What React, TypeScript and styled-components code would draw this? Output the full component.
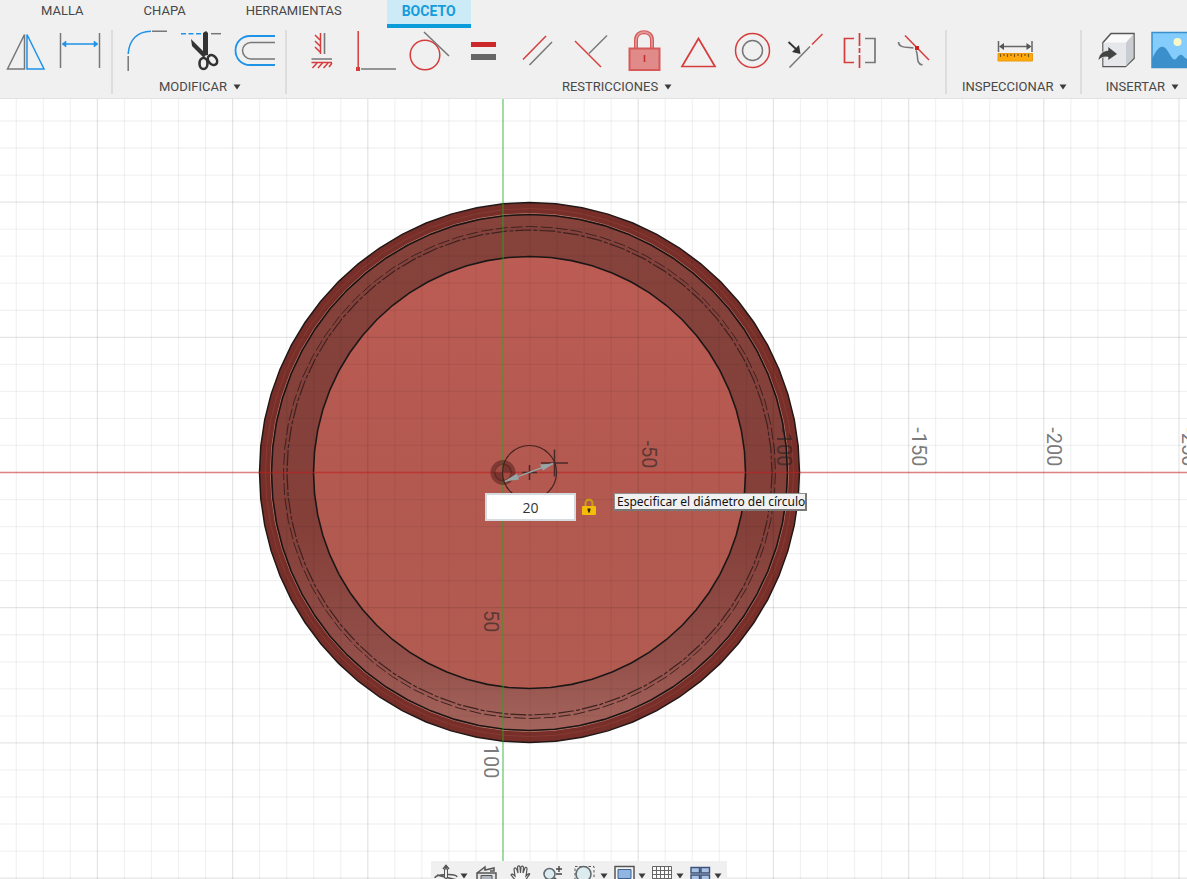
import React from "react";
import styled, { createGlobalStyle } from "styled-components";

const BLUE = "#1e93e8";
const GREY = "#777777";
const RED = "#d63c3c";

const GlobalStyle = createGlobalStyle`
  * { box-sizing: border-box; }
  body { margin: 0; background: #ffffff; }
`;

const Shell = styled.div`
  display: flex;
  flex-direction: column;
  height: 100vh;
  overflow: hidden;
  font-family: Roboto, "Liberation Sans", sans-serif;
  font-size: 13px;
  color: #484848;
`;

const Header = styled.header`
  flex: none;
  background: #f0f0f0;
  border-bottom: 1px solid #e2e2e2;
  overflow: hidden;
`;

const Tabs = styled.nav`
  display: flex;
  padding-left: 26px;
  height: 28px;
`;

const Tab = styled.button<{ $active?: boolean }>`
  font: inherit;
  font-size: ${(p) => (p.$active ? 14 : 13)}px;
  font-weight: ${(p) => (p.$active ? 700 : 400)};
  color: ${(p) => (p.$active ? "#169bdc" : "inherit")};
  background: ${(p) => (p.$active ? "#cdebf7" : "transparent")};
  border: 0;
  border-bottom: 4px solid ${(p) => (p.$active ? "#0b9cdc" : "transparent")};
  padding: 0 15px 2px;
  margin-right: ${(p) => (p.$active ? 0 : 30)}px;
  line-height: 20px;
`;

const Ribbon = styled.div`
  display: flex;
  height: 70px;
`;

const Section = styled.section<{ $pad: string; $grow?: boolean }>`
  flex: ${(p) => (p.$grow ? "1 0 auto" : "none")};
  display: flex;
  flex-direction: column;
  align-items: ${(p) => (p.$grow ? "flex-start" : "center")};
  padding: ${(p) => p.$pad};
  position: relative;
  &:not(:last-child)::after {
    content: "";
    position: absolute;
    right: 0;
    top: 2px;
    bottom: 4px;
    width: 2px;
    background: #dddddd;
  }
`;

const Tools = styled.div`
  display: flex;
  height: 48px;
`;

const ToolButton = styled.button`
  flex: none;
  width: 54px;
  height: 48px;
  padding: 0;
  border: 0;
  background: transparent;
  svg { display: block; }
`;

const SectionLabel = styled.button<{ $width?: number }>`
  display: flex;
  align-items: center;
  justify-content: center;
  gap: 6px;
  width: ${(p) => (p.$width ? p.$width + "px" : "auto")};
  padding: 0;
  border: 0;
  background: transparent;
  font: inherit;
  color: inherit;
  line-height: 22px;
  white-space: nowrap;
`;

const Canvas = styled.main`
  flex: 1;
  min-height: 0;
  position: relative;
  overflow: hidden;
  background: #ffffff;
`;

const Scene = styled.svg`
  display: block;
  width: 100%;
  height: 100%;
`;

const AxisText = styled.text`
  font-family: "Liberation Sans Narrow", Roboto, sans-serif;
  font-size: 20px;
  fill: #222222;
  fill-opacity: 0.62;
`;

const DimensionEntry = styled.form`
  position: absolute;
  left: 485px;
  top: 394px;
  display: flex;
  align-items: flex-start;
`;

const DimensionInput = styled.input`
  width: 91px;
  height: 28px;
  padding: 0;
  border: 2px solid #d5dade;
  background: #ffffff;
  color: #333333;
  font: 14px "Open Sans", sans-serif;
  text-align: center;
  outline: 0;
`;

const LockButton = styled.button`
  margin: 5px 17px 0 5px;
  padding: 0;
  border: 0;
  background: transparent;
  svg { display: block; }
`;

const Hint = styled.label`
  padding: 0 0 0 2px;
  border: 1px solid #909090;
  border-right: 2px solid #777777;
  border-bottom: 2px solid #777777;
  background: #f1f1f1;
  color: #111111;
  font: 12px/15px "Noto Sans", sans-serif;
  white-space: nowrap;
`;

const ViewBar = styled.div`
  position: absolute;
  left: 431px;
  bottom: -10px;
  display: flex;
  gap: 4px;
  height: 28px;
  padding: 0 5px 0 3px;
  background: #f0f0f0;
`;

const ViewButton = styled.button<{ $menu?: boolean }>`
  display: flex;
  align-items: flex-start;
  justify-content: center;
  gap: 2px;
  width: ${(p) => (p.$menu ? 34 : 30)}px;
  padding: 0;
  border: 0;
  background: transparent;
`;

const CaretBox = styled.span`
  padding-top: 12px;
  svg { display: block; }
`;

const Caret = () => (
  <svg width="8" height="6" aria-hidden="true">
    <path d="M0.5 0.5h7l-3.5 5z" fill="#3c3c3c" />
  </svg>
);

type Tool = { name: string; art: React.ReactNode };

const createTools: Tool[] = [
  {
    name: "Simetría",
    art: (
      <>
        <path d="M24.5 6.5V41H7.5z" stroke={GREY} />
        <path d="M27 6.5V41H44z" stroke={BLUE} />
      </>
    ),
  },
  {
    name: "Cota de boceto",
    art: (
      <>
        <path d="M6.5 5v35M45.5 5v35" stroke={GREY} />
        <path d="M9 16h34" stroke={BLUE} />
        <path d="M8 16l4-3v6zM44 16l-4-3v6z" fill={BLUE} stroke={BLUE} strokeWidth="0.6" />
      </>
    ),
  },
];

const modifyTools: Tool[] = [
  {
    name: "Empalme",
    art: (
      <>
        <path d="M9.200 26C10 12 18 3.500 32 3.300" stroke={BLUE} />
        <path d="M9.200 28v15M33 3.300h15" stroke={GREY} />
      </>
    ),
  },
  {
    name: "Recortar",
    art: (
      <>
        <path d="M8 5.700h22" stroke={BLUE} strokeDasharray="5 2.500" />
        <path d="M38 5.700h10" stroke={GREY} />
        <path d="M18 11l15 15-2 4L19 18zM30 5l3-2 2 2v22l-5 1z" fill="#333" />
        <ellipse cx="30.500" cy="35.500" rx="4" ry="5.500" stroke="#333" strokeWidth="2.600" />
        <ellipse cx="39.500" cy="32" rx="4" ry="5.500" transform="rotate(-38 39.5 32)" stroke="#333" strokeWidth="2.600" />
      </>
    ),
  },
  {
    name: "Desfase",
    art: (
      <>
        <path d="M48 8H23C14 8 8.500 15 8.500 22.500S14 37 23 37h25" stroke={BLUE} strokeWidth="1.800" />
        <path d="M48 14.500H24c-5 0-8.500 4-8.500 8s3.500 8.500 8.500 8.500h24" stroke={GREY} />
      </>
    ),
  },
];

const constraintTools: Tool[] = [
  {
    name: "Horizontal/Vertical",
    art: (
      <>
        <path d="M27.500 5v21M22 7l5 5M22 13l5 5M22 19l5 5M18.500 34.500H39M24 35l-4.500 5M29.500 35l-4.500 5M35 35l-4.500 5M39 35l-3 4" stroke={RED} />
        <path d="M31.500 5v21M18.500 31H39" stroke={GREY} strokeWidth="1.600" />
      </>
    ),
  },
  {
    name: "Coincidente",
    art: (
      <>
        <path d="M11.200 3v36" stroke={RED} />
        <path d="M14 41h35" stroke={GREY} />
        <path d="M9 39h4v4H9z" fill={RED} />
      </>
    ),
  },
  {
    name: "Tangente",
    art: (
      <>
        <circle cx="24" cy="27" r="14.800" stroke={RED} />
        <path d="M23 4l25 24" stroke={GREY} strokeWidth="1.600" />
      </>
    ),
  },
  {
    name: "Igual",
    art: (
      <>
        <path d="M16 14h25v5H16z" fill="#cc2a2a" />
        <path d="M16 26h25v6H16z" fill="#666" />
      </>
    ),
  },
  {
    name: "Paralelo",
    art: (
      <>
        <path d="M14 31.500L37 8" stroke={RED} />
        <path d="M20.500 37L43 14" stroke={GREY} />
      </>
    ),
  },
  {
    name: "Perpendicular",
    art: (
      <>
        <path d="M12 13l26 26" stroke={RED} />
        <path d="M26 25.500L44 7.500" stroke={GREY} />
      </>
    ),
  },
  {
    name: "Fijar/No fijar",
    art: (
      <>
        <path d="M19 20v-8c0-10.500 16-10.500 16 0v8" stroke="#d45a5a" strokeWidth="4" />
        <path d="M19 20v-8c0-10.500 16-10.500 16 0v8" stroke="#e59a9a" strokeWidth="1.600" />
        <rect x="12.500" y="20.500" width="30" height="21.500" fill="#e08a8a" stroke="#d65a5a" strokeWidth="2" />
        <path d="M27.500 27v7" stroke="#c43030" strokeWidth="1.600" />
      </>
    ),
  },
  { name: "Punto medio", art: <path d="M27.500 10.500L44 38.500H11z" stroke={RED} strokeWidth="1.700" /> },
  {
    name: "Concéntrico",
    art: (
      <>
        <circle cx="27.500" cy="22.500" r="17" stroke={RED} />
        <circle cx="27.500" cy="22.500" r="10" stroke={GREY} />
      </>
    ),
  },
  {
    name: "Colineal",
    art: (
      <>
        <path d="M10.500 39.500L31 18.500" stroke={GREY} />
        <path d="M33 16.500L43.500 6" stroke={RED} />
        <path d="M9.500 14l8 7.500" stroke="#333" strokeWidth="1.800" />
        <path d="M21.500 26l-8.500-2 7-7z" fill="#333" />
      </>
    ),
  },
  {
    name: "Simetría",
    art: (
      <>
        <path d="M21 10.500H11.500v24H21M26.500 5v13M26.500 20v5M26.500 27v13" stroke={RED} strokeWidth="1.700" />
        <path d="M32 10.500h10v24H32" stroke={GREY} strokeWidth="1.700" />
      </>
    ),
  },
  {
    name: "Curvatura",
    art: (
      <>
        <path d="M11.500 14c0 6 8 5 15 6M29 22.500c3 4-1 13 6.500 14.500" stroke={GREY} strokeWidth="1.600" />
        <path d="M18 7.500l24 24.500" stroke={RED} />
        <path d="M28 18h4v4h-4z" fill="#cc2222" />
      </>
    ),
  },
];

const inspectTools: Tool[] = [
  {
    name: "Medir",
    art: (
      <>
        <path d="M10.500 13v11M44 13v11M13 18.500h29" stroke="#666" />
        <path d="M11 18.500l5-3.500v7zM43.500 18.500l-5-3.500v7z" fill="#555" />
        <path d="M10 25.500h34.500V33H10z" fill="#ffa90a" stroke="#e99a10" strokeWidth="1" />
        <path d="M12.500 26v3M16 26v2M19.500 26v3M23 26v2M26.500 26v3M30 26v2M33.500 26v3M37 26v2M40.500 26v3" stroke="#7a5518" strokeWidth="1.200" />
      </>
    ),
  },
];

const insertTools: Tool[] = [
  {
    name: "Insertar derivado",
    art: (
      <>
        <path d="M15 14.500L23 5.500h23v25l-8.500 8H15z" fill="#fafafa" stroke="#555" strokeWidth="1.500" />
        <path d="M15.500 14.500h22.500v23.500H15.500z" fill="#e6e7ea" />
        <path d="M38 14.500l7.500-8.500v24l-7.500 8z" fill="#c9ccd1" />
        <path d="M10 33c1-9 7-10.500 10-10.500v-4l9.500 7.500-9.500 6.500v-3.500c-5-.5-8 1-10 4z" fill="#444" stroke="#f7f7f7" strokeWidth="0.600" />
      </>
    ),
  },
  {
    name: "Lienzo",
    art: (
      <>
        <path d="M10 4.500h40v35H10z" fill="#84ccfb" />
        <path d="M10 31C15 20 20 15 25 22c4 6 6 11 9 9 3-4 5-6 8-2 3 3 5 2 8-4v14.500H10z" fill="#3b8fca" />
        <circle cx="35.500" cy="14" r="4" fill="#fbf8c8" />
        <path d="M10 4.500h40v35H10z" stroke="#3b8fca" strokeWidth="1.500" />
      </>
    ),
  },
];

const ToolRow = ({ tools }: { tools: Tool[] }) => (
  <Tools>
    {tools.map((tool) => (
      <ToolButton key={tool.name} type="button" aria-label={tool.name}>
        <svg width="54" height="48" fill="none" strokeWidth="1.500" aria-hidden="true">
          {tool.art}
        </svg>
      </ToolButton>
    ))}
  </Tools>
);

/* The sketch plane: every model ring is faceted, as the viewport draws it. */
const MINOR = 27.04;
const range = (from: number, to: number) => Array.from({ length: to - from + 1 }, (_, i) => from + i);
const lines = range(-90, 90);

const facets = (radius: number, count = 64) =>
  range(0, count - 1)
    .map((i) => {
      const a = (i / count) * Math.PI * 2;
      return `${(Math.cos(a) * radius).toFixed(2)},${(Math.sin(a) * radius).toFixed(2)}`;
    })
    .join(" ");

const axisLabels = [
  { x: 139, y: -4, text: "-50" },
  { x: 274, y: -6, text: "-100" },
  { x: 409, y: -6, text: "-150" },
  { x: 544, y: -6, text: "-200" },
  { x: 679, y: -6, text: "-250" },
  { x: -19, y: 160, text: "50" },
  { x: -19, y: 306, text: "100" },
];

const Model = () => (
  <g transform="translate(26.5 0)">
    <polygon points={facets(270)} fill="#782f29" />
    <polygon points={facets(264)} fill="none" stroke="#863b34" strokeWidth="1" />
    <polygon points={facets(259)} fill="url(#wall)" stroke="#b47a6a" strokeWidth="1" />
    <polygon points={facets(258)} fill="none" stroke="#1c1414" strokeWidth="1.600" />
    <polygon points={facets(246)} fill="none" stroke="#3e2220" strokeWidth="1" strokeDasharray="12 3" />
    <polygon points={facets(242.500)} fill="none" stroke="#3e2220" strokeWidth="1.200" strokeDasharray="16 2 4 2" />
    <polygon points={facets(216)} fill="url(#floor)" stroke="#1c1717" strokeWidth="1.600" />
    <polygon points={facets(270)} fill="none" stroke="#211817" strokeWidth="1.500" />
  </g>
);

const viewTools = [
  {
    name: "Órbita",
    menu: true,
    art: (
      <>
        <path d="M12 18V5M9 8l3-3.500L15 8M1 17c0-4 21-5 22-1M3 14l20 5" stroke="#555" strokeWidth="1.600" />
        <path d="M10.500 17V8h3v9z" fill="#eee" stroke="#555" />
      </>
    ),
  },
  {
    name: "Mirar a",
    art: (
      <>
        <path d="M2 12l8-6v3l9-2v3h-4M2 12h19v10H2z" fill="#e2e4e6" stroke="#555" strokeWidth="1.500" />
        <path d="M6 14.500h11v6H6z" fill="#aeb4bb" stroke="#555" />
      </>
    ),
  },
  {
    name: "Encuadre",
    art: (
      <path
        d="M7 20L2 14c1-2 3 0 4 1L5 8c1-2 2-1 3 1l1 3-.5-6c1-2 2-1 2.500 0l.5 6 .5-6c1-1.500 2-1 2.500 0l-.5 6 2-5c1-1.500 2-.5 2 1l-1 7 2-2c2-1 2 0 1 1l-4 6z"
        fill="#f7f7f7"
        stroke="#555"
        strokeWidth="1.200"
      />
    ),
  },
  {
    name: "Zoom",
    art: (
      <>
        <circle cx="6.500" cy="13" r="5.500" fill="#dcebed" stroke="#5d676c" strokeWidth="1.500" />
        <path d="M11 17l4 4" stroke="#555" strokeWidth="2.500" />
        <path d="M13 8h6M16 5v6M13 13h6" stroke="#444" strokeWidth="1.400" />
      </>
    ),
  },
  {
    name: "Ajustar",
    menu: true,
    art: (
      <>
        <path d="M1 5.500h19v17H1z" stroke="#555" strokeDasharray="2.500 2" />
        <circle cx="9.500" cy="13" r="7.500" fill="#dcebed" stroke="#5d676c" strokeWidth="1.500" />
      </>
    ),
  },
  {
    name: "Configuración de visualización",
    menu: true,
    art: (
      <>
        <path d="M3 5.500h19v15H3z" fill="#f5f5f5" stroke="#555" strokeWidth="1.500" />
        <path d="M6 8.500h13v9H6z" fill="#8fb5e3" stroke="#3f608c" />
      </>
    ),
  },
  {
    name: "Rejilla y ajustes",
    menu: true,
    art: (
      <>
        <path d="M2.500 5.500h19v18h-19z" fill="#fafafa" />
        <path d="M2.500 5.500h19v18h-19zM6.500 5v18M10.500 5v18M14.500 5v18M18.500 5v18M2 9.500h20M2 13.500h20M2 17.500h20" stroke="#666" />
      </>
    ),
  },
  {
    name: "Ventanas gráficas",
    menu: true,
    art: <path d="M3 6.500h8.500v5.500H3zM13 6.500h8.500v5.500H13zM3 14h8.500v6H3zM13 14h8.500v6H13z" fill="#a9c2e4" stroke="#3c5278" strokeWidth="1.400" />,
  },
];

export default function App() {
  return (
    <Shell>
      <GlobalStyle />
      <Header>
        <Tabs>
          <Tab type="button">MALLA</Tab>
          <Tab type="button">CHAPA</Tab>
          <Tab type="button">HERRAMIENTAS</Tab>
          <Tab type="button" $active>BOCETO</Tab>
        </Tabs>
        <Ribbon>
          <Section $pad="0 5px 0 0">
            <ToolRow tools={createTools} />
          </Section>
          <Section $pad="0 6px">
            <ToolRow tools={modifyTools} />
            <SectionLabel type="button">MODIFICAR <Caret /></SectionLabel>
          </Section>
          <Section $pad="0 6px">
            <ToolRow tools={constraintTools} />
            <SectionLabel type="button">RESTRICCIONES <Caret /></SectionLabel>
          </Section>
          <Section $pad="0 15px">
            <ToolRow tools={inspectTools} />
            <SectionLabel type="button">INSPECCIONAR <Caret /></SectionLabel>
          </Section>
          <Section $pad="0 6px" $grow>
            <ToolRow tools={insertTools} />
            <SectionLabel type="button" $width={108}>INSERTAR <Caret /></SectionLabel>
          </Section>
        </Ribbon>
      </Header>
      <Canvas>
        <Scene role="img" aria-label="Plano de boceto">
          <defs>
            <linearGradient id="wall" x1="0" y1="0" x2="0" y2="1">
              <stop offset="0" stopColor="#85433c" />
              <stop offset="0.600" stopColor="#843f39" />
              <stop offset="0.850" stopColor="#924e48" />
              <stop offset="1" stopColor="#a4655d" />
            </linearGradient>
            <linearGradient id="floor" x1="0" y1="0" x2="0" y2="1">
              <stop offset="0" stopColor="#bc5c54" />
              <stop offset="0.500" stopColor="#b3594f" />
              <stop offset="1" stopColor="#b25b51" />
            </linearGradient>
          </defs>
          <g transform="translate(503 373.500)">
            <Model />
            <g stroke="#000000">
              {lines.map((i) => (
                <g key={i} strokeOpacity={i % 5 === 0 ? 0.1 : 0.05} strokeWidth="1.300">
                  <path d={`M${i * MINOR} -2500V2500`} />
                  <path d={`M-2500 ${i * MINOR}H2500`} />
                </g>
              ))}
            </g>
            {axisLabels.map((l) => (
              <AxisText key={l.text} textAnchor="end" transform={`translate(${l.x} ${l.y}) rotate(90)`}>
                {l.text}
              </AxisText>
            ))}
            <path d="M-2500 0H2500" stroke="#d82020" strokeOpacity="0.500" strokeWidth="1.400" />
            <path d="M0 -2500V2500" stroke="#22c022" strokeOpacity="0.500" strokeWidth="1.500" />
            <circle r="9" fill="#5a2020" fillOpacity="0.200" />
            <circle r="10" fill="none" stroke="#4c1b18" strokeOpacity="0.500" strokeWidth="5" />
            <path d="M0 0V-9A9 9 0 0 1 9 0zM0 0V9A9 9 0 0 1 -9 0z" fill="#4c1b18" fillOpacity="0.450" />
            <circle cx="26.500" r="27" fill="none" stroke="#402220" strokeWidth="1.200" />
            <path d="M19 0h15M26.500 -7.500v15M38 -9.500h27M51.500 -23v27" stroke="#4a2a28" strokeWidth="1.500" />
            <path d="M2 9L50 -9" stroke="#95a5a8" strokeWidth="1.400" />
            <path d="M1 9l13-8 2 6zM51 -9l-14 1 3 6z" fill="#95a5a8" />
          </g>
        </Scene>
        <DimensionEntry>
          <DimensionInput id="diameter" type="text" defaultValue="20" />
          <LockButton type="button" aria-label="Bloquear cota">
            <svg width="16" height="18" fill="none" aria-hidden="true">
              <path d="M4.500 9V5.500c0-5 7-5 7 0V9" stroke="#c9a010" strokeWidth="2" />
              <rect x="1" y="8" width="14" height="9" rx="1" fill="#f3bd08" />
              <path d="M8 10.500v4M6.500 11.500h3" stroke="#2a2205" strokeWidth="1.800" />
            </svg>
          </LockButton>
          <Hint htmlFor="diameter">Especificar el diámetro del círculo</Hint>
        </DimensionEntry>
        <ViewBar>
          {viewTools.map((tool) => (
            <ViewButton key={tool.name} type="button" aria-label={tool.name} $menu={tool.menu}>
              <svg width="24" height="28" fill="none" aria-hidden="true">{tool.art}</svg>
              {tool.menu && <CaretBox><Caret /></CaretBox>}
            </ViewButton>
          ))}
        </ViewBar>
      </Canvas>
    </Shell>
  );
}
